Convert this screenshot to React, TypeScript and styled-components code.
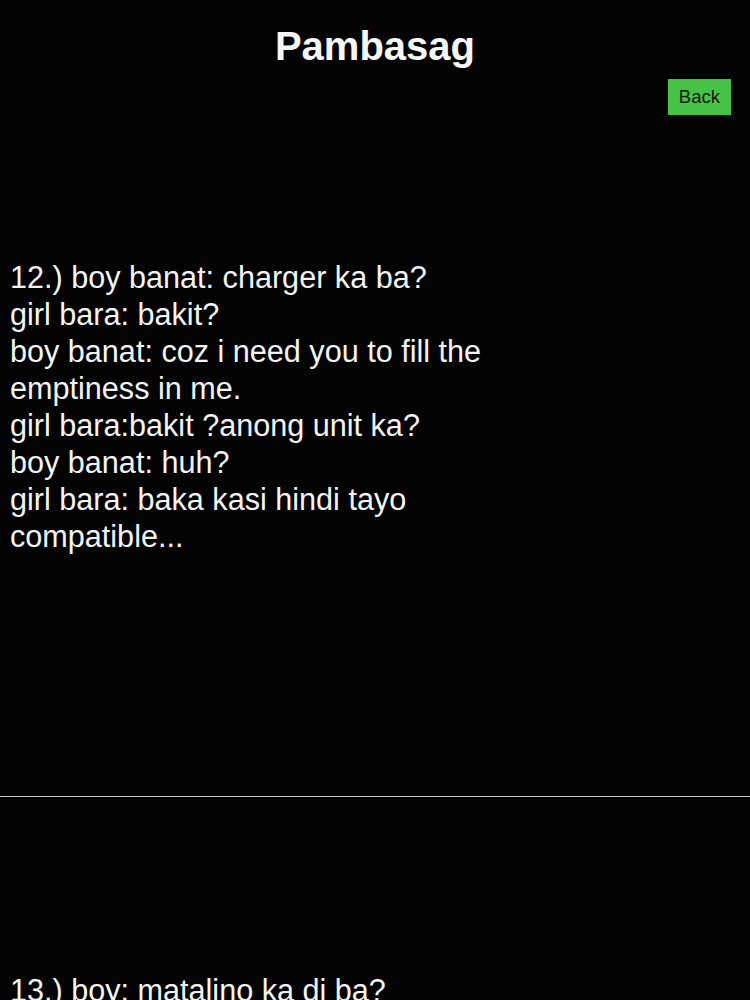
import styled, { createGlobalStyle } from "styled-components";

const GlobalStyle = createGlobalStyle`
  html, body {
    margin: 0;
    padding: 0;
    background: #030303;
  }
  body {
    font-family: "Liberation Sans", Arial, Helvetica, sans-serif;
    color: #f4f4f4;
  }
`;

const Page = styled.div`
  display: flex;
  flex-direction: column;
  width: 750px;
  min-height: 1000px;
  background: #030303;
`;

const Header = styled.header`
  display: flex;
  justify-content: center;
  padding-top: 22px;
`;

const Title = styled.h1`
  margin: 0;
  font-size: 40px;
  line-height: 48px;
  font-weight: 700;
  color: #f7f7f7;
`;

const Toolbar = styled.div`
  display: flex;
  justify-content: flex-end;
  margin-top: 9px;
  padding-right: 19px;
`;

const BackButton = styled.button`
  height: 36px;
  padding: 0 11px;
  border: none;
  border-radius: 0;
  background: #46c346;
  color: #161616;
  font-family: "Liberation Sans", Arial, sans-serif;
  font-size: 18.5px;
  cursor: pointer;
`;

const List = styled.div`
  display: flex;
  flex-direction: column;
`;

const Item = styled.div`
  padding: 175px 10px 241px;
  border-bottom: 1px solid #c9c9c9;

  &:first-child {
    padding-top: 144px;
  }
`;

const Joke = styled.p`
  margin: 0;
  width: 545px;
  font-size: 30.6px;
  line-height: 37px;
  color: #f4f4f4;
`;

const jokes = [
  [
    "12.) boy banat: charger ka ba?",
    "girl bara: bakit?",
    "boy banat: coz i need you to fill the emptiness in me.",
    "girl bara:bakit ?anong unit ka?",
    "boy banat: huh?",
    "girl bara: baka kasi hindi tayo compatible...",
  ],
  [
    "13.) boy: matalino ka di ba?",
    "girl: oo naman, bakit?",
    "boy: sagutin mo nga ako.",
    "girl: hindi.",
  ],
];

export default function App() {
  return (
    <>
      <GlobalStyle />
      <Page>
        <Header>
          <Title>Pambasag</Title>
        </Header>
        <Toolbar>
          <BackButton>Back</BackButton>
        </Toolbar>
        <List>
          {jokes.map((lines, i) => (
            <Item key={i}>
              <Joke>
                {lines.map((line, j) => (
                  <span key={j}>
                    {line}
                    {j < lines.length - 1 && <br />}
                  </span>
                ))}
              </Joke>
            </Item>
          ))}
        </List>
      </Page>
    </>
  );
}
